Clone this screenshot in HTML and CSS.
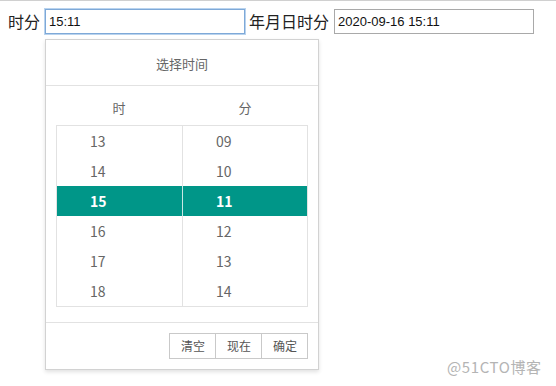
FILE: index.html
```html
<!DOCTYPE html>
<html lang="zh-CN">
<head>
    <meta charset="UTF-8">
    <title>时间选择</title>
    <link rel="stylesheet" href="styles.css">
</head>
<body>
    <div class="bar">
        <span class="label">时分</span>
        <input type="text" class="field focus" value="15:11">
        <span class="label second">年月日时分</span>
        <input type="text" class="field" value="2020-09-16 15:11">
    </div>

    <div class="laydate">
        <div class="laydate-header">选择时间</div>
        <div class="laydate-content">
            <div class="time-head">
                <span>时</span>
                <span>分</span>
            </div>
            <div class="time-list">
                <ol>
                    <li>13</li>
                    <li>14</li>
                    <li class="this">15</li>
                    <li>16</li>
                    <li>17</li>
                    <li>18</li>
                </ol>
                <ol>
                    <li>09</li>
                    <li>10</li>
                    <li class="this">11</li>
                    <li>12</li>
                    <li>13</li>
                    <li>14</li>
                </ol>
            </div>
        </div>
        <div class="laydate-footer">
            <span class="btn">清空</span><span class="btn">现在</span><span class="btn">确定</span>
        </div>
    </div>

    <div class="watermark">@51CTO博客</div>
</body>
</html>
```

FILE: styles.css
```css
html {
    border-top: 1px solid #d0d0d0;
}
body {
    margin: 0;
    width: 556px;
    height: 385px;
    position: relative;
    background-color: white;
    font-family: "Noto Sans CJK SC", "Liberation Sans", sans-serif;
    overflow: hidden;
}
.bar {
    display: flex;
    align-items: center;
    padding: 8px 0 0 8px;
}
.label {
    font-size: 16px;
    color: #222;
    line-height: 25px;
}
.label.second {
    margin-left: 4px;
}
.field {
    box-sizing: border-box;
    width: 200px;
    height: 25px;
    margin-left: 5px;
    padding: 0 3px;
    border: 1px solid #a9a9a9;
    font-family: "Liberation Sans", Arial, sans-serif;
    font-size: 13px;
    color: #111;
    outline: none;
}
.field.focus {
    border-color: #7ea9d8;
    box-shadow: 0 0 0 1px #b9d3ee;
}
.laydate {
    position: absolute;
    left: 45px;
    top: 38px;
    width: 272px;
    border: 1px solid #d2d2d2;
    box-shadow: 0 2px 4px rgba(0,0,0,0.12);
    background-color: white;
    color: #666;
    font-size: 14px;
}
.laydate-header {
    height: 45px;
    line-height: 48px;
    text-align: center;
    font-size: 13px;
    border-bottom: 1px solid #e2e2e2;
}
.laydate-content {
    padding: 10px;
    height: 216px;
}
.time-head {
    display: flex;
    height: 29px;
    line-height: 24px;
    font-size: 13px;
}
.time-head span {
    flex: 1;
    text-align: center;
}
.time-list {
    display: flex;
    border: 1px solid #e2e2e2;
}
.time-list ol {
    flex: 1;
    margin: 0;
    padding: 0;
    list-style: none;
}
.time-list li {
    height: 30px;
    line-height: 30px;
    padding-left: 33px;
}
.time-list ol + ol li {
    border-left: 1px solid #e2e2e2;
}
.time-list li.this {
    background-color: #009688;
    color: white;
    font-weight: bold;
}
.time-list ol + ol li.this {
    border-left-color: #c9e7e4;
}
.laydate-footer {
    height: 26px;
    padding: 10px;
    border-top: 1px solid #e2e2e2;
    text-align: right;
    font-size: 0;
}
.btn {
    display: inline-block;
    height: 24px;
    line-height: 24px;
    padding: 0 10px 0 11px;
    border: 1px solid #c9c9c9;
    margin-left: -1px;
    font-size: 12px;
    color: #555;
}
.watermark {
    position: absolute;
    left: 447px;
    top: 355px;
    font-size: 15px;
    letter-spacing: 0.6px;
    color: #b4b4b4;
    font-family: "Noto Sans CJK SC", sans-serif;
}
```
